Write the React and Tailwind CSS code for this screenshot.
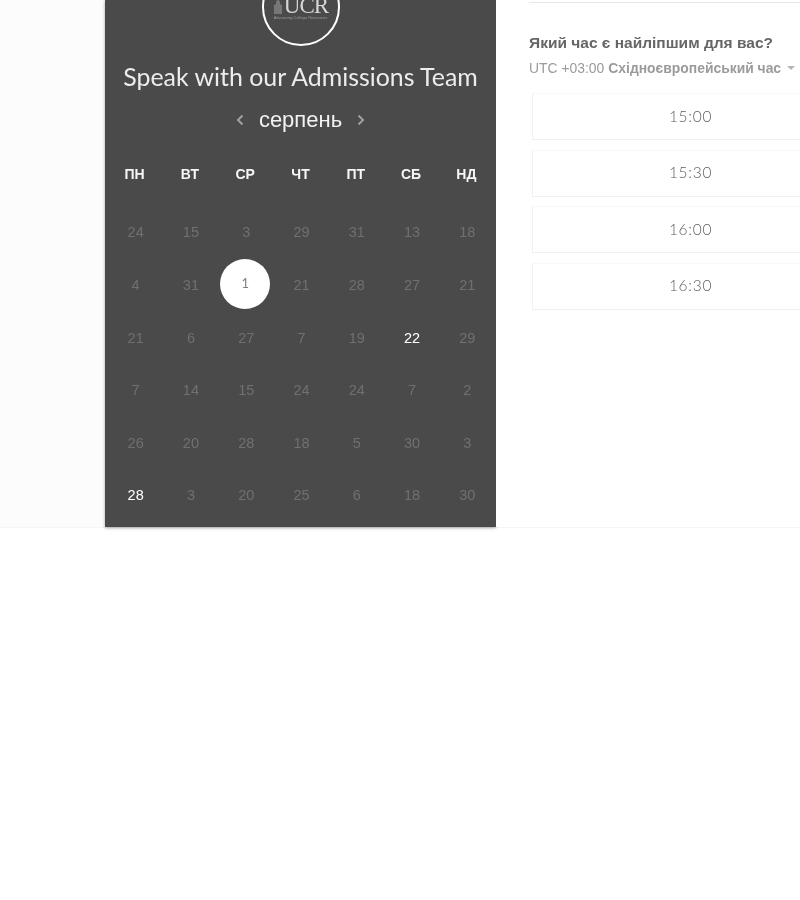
import React from 'react';

const days = ['ПН', 'ВТ', 'СР', 'ЧТ', 'ПТ', 'СБ', 'НД'];

const weeks = [
  [24, 15, 3, 29, 31, 13, 18],
  [4, 31, 1, 21, 28, 27, 21],
  [21, 6, 27, 7, 19, 22, 29],
  [7, 14, 15, 24, 24, 7, 2],
  [26, 20, 28, 18, 5, 30, 3],
  [28, 3, 20, 25, 6, 18, 30],
];

const slots = ['15:00', '15:30', '16:00', '16:30'];

const Cell = ({ value, week, col }) => {
  if (week === 1 && col === 2) {
    return (
      <div className="flex items-center justify-center h-[52.6px]">
        <div className="w-[50px] h-[50px] -ml-[2px] -mt-[3px] shrink-0 rounded-full bg-white flex items-center justify-center text-[13px] text-[#808080] font-['Lato',sans-serif] pb-[2px]">
          {value}
        </div>
      </div>
    );
  }
  const active = (week === 2 && col === 5) || (week === 5 && col === 0);
  return (
    <div
      className={`flex items-center justify-center h-[52.6px] text-[14.5px] font-['Liberation_Sans',sans-serif] ${
        active ? 'text-white' : 'text-[#707070]'
      }`}
    >
      {value}
    </div>
  );
};

export default function App() {
  return (
    <div className="w-[800px] h-[900px] bg-white overflow-hidden grayscale">
      <div className="flex h-[528px] bg-[#fcfcfc] border-b border-[#f5f5f5]">
        {/* Calendar */}
        <div className="ml-[105px] w-[391px] h-[527px] bg-[#4a4a4a] shadow-[0_1px_3px_rgba(0,0,0,0.35)] overflow-hidden shrink-0 flex flex-col items-center">
          <div className="w-[78px] h-[78px] -mt-[32px] shrink-0 rounded-full border-[2.5px] border-white flex flex-col items-center justify-end pb-[24px]">
            <div className="flex items-end text-[#d6d6d6] leading-none">
              <svg width="10" height="16" viewBox="0 0 10 16" className="mb-[1px] mr-[1px]">
                <path d="M1 16V7l2-1V4l2-3 2 3v2l2 1v9z" fill="#777777" />
              </svg>
              <span className="font-['Liberation_Serif',serif] text-[23px] leading-[18px] tracking-[-1px]">UCR</span>
            </div>
            <div className="text-[4px] leading-[5px] text-[#9a9a9a] font-['Liberation_Sans',sans-serif] whitespace-nowrap">
              Advancing College Resources
            </div>
          </div>
          <h1 className="mt-[16px] text-[24.9px] leading-[28px] text-[#ececec] font-['Lato',sans-serif] whitespace-nowrap">
            Speak with our Admissions Team
          </h1>
          <div className="mt-[15px] flex items-center gap-[15px] h-[30px]">
            <svg width="8" height="12" viewBox="0 0 8 12" fill="none" stroke="#a0a0a0" strokeWidth="2">
              <path d="M6.5 1.5 2 6l4.5 4.5" />
            </svg>
            <span className="text-[22px] leading-none text-[#f2f2f2] font-['Liberation_Sans',sans-serif]">серпень</span>
            <svg width="8" height="12" viewBox="0 0 8 12" fill="none" stroke="#a0a0a0" strokeWidth="2">
              <path d="M1.5 1.5 6 6l-4.5 4.5" />
            </svg>
          </div>
          <div className="w-full mt-[29px] px-[2px]">
            <div className="grid grid-cols-7 h-[20px] items-center text-center text-[14px] font-bold text-[#f6f6f6] font-['Liberation_Sans',sans-serif]">
              {days.map((d) => (
                <div key={d}>{d}</div>
              ))}
            </div>
            <div className="mt-[23px] ml-[1px] -mr-[1px] grid grid-cols-7">
              {weeks.map((week, w) =>
                week.map((value, c) => <Cell key={`${w}-${c}`} value={value} week={w} col={c} />)
              )}
            </div>
          </div>
        </div>

        {/* Times */}
        <div className="flex-1 pl-[33px] bg-white min-w-0 overflow-hidden">
          <div className="h-[3px] border-b border-[#e8e8e8] w-[400px]" />
          <h2 className="mt-[31px] text-[15.5px] leading-[18px] font-bold text-[#666666] font-['Liberation_Sans',sans-serif] whitespace-nowrap">
            Який час є найліпшим для вас?
          </h2>
          <div className="mt-[7px] flex items-center text-[13.9px] leading-[18px] text-[#9b9b9b] font-['Liberation_Sans',sans-serif] whitespace-nowrap">
            <span>UTC +03:00</span>
            <span className="ml-[4px] font-bold">Східноєвропейський час</span>
            <span className="ml-[6px] w-0 h-0 border-x-[4px] border-x-transparent border-t-[4px] border-t-[#b5b5b5]" />
          </div>
          <div className="mt-[16px] ml-[3px] w-[316px] flex flex-col gap-[9.5px]">
            {slots.map((s) => (
              <div
                key={s}
                className="h-[47px] bg-white border-l border-b border-t border-l-[#f0f0f0] border-b-[#f0f0f0] border-t-[#f8f8f8] flex items-center justify-center text-[15.5px] font-light tracking-[0.7px] text-[#606060] font-['Lato',sans-serif]"
              >
                {s}
              </div>
            ))}
          </div>
        </div>
      </div>
    </div>
  );
}
